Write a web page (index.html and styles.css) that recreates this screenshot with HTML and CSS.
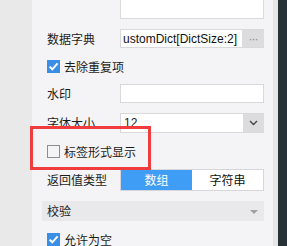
FILE: index.html
```html
<!DOCTYPE html>
<html lang="zh">
<head>
<meta charset="utf-8">
<link rel="stylesheet" href="styles.css">
</head>
<body>
<div class="screen">
  <div class="gutter"></div>
  <div class="panel">
    <div class="row r-top">
      <div class="field top-box"></div>
    </div>
    <div class="row r-dict">
      <span class="label">数据字典</span>
      <div class="field dict">
        <span class="dict-text">ustomDict[DictSize:2]</span>
        <span class="dots">···</span>
      </div>
    </div>
    <div class="row r-check">
      <span class="cb checked"><svg viewBox="0 0 13 13" width="13" height="13"><path d="M2.6 6.6 L5.3 9.3 L10.6 3.4" fill="none" stroke="#fff" stroke-width="2"/></svg></span>
      <span class="cb-label">去除重复项</span>
    </div>
    <div class="row r-input">
      <span class="label">水印</span>
      <div class="field"></div>
    </div>
    <div class="row r-select">
      <span class="label">字体大小</span>
      <div class="field select">
        <span class="sel-text">12</span>
        <span class="sel-arrow"><svg viewBox="0 0 9 6" width="9" height="6"><path d="M1 1 L4.5 4.5 L8 1" fill="none" stroke="#444" stroke-width="1.4"/></svg></span>
      </div>
    </div>
    <div class="row r-check2">
      <span class="cb"></span>
      <span class="cb-label">标签形式显示</span>
    </div>
    <div class="row r-seg">
      <span class="label">返回值类型</span>
      <div class="seg">
        <span class="seg-item active">数组</span>
        <span class="seg-item">字符串</span>
      </div>
    </div>
    <div class="row r-head">
      <div class="section-head">
        <span>校验</span>
        <span class="tri"></span>
      </div>
    </div>
    <div class="row r-check3">
      <span class="cb checked"><svg viewBox="0 0 13 13" width="13" height="13"><path d="M2.6 6.6 L5.3 9.3 L10.6 3.4" fill="none" stroke="#fff" stroke-width="2"/></svg></span>
      <span class="cb-label">允许为空</span>
    </div>
    <div class="highlight"></div>
  </div>
  <div class="strip"></div>
  <div class="dark"></div>
</div>
</body>
</html>
```

FILE: styles.css
```css
* { box-sizing: border-box; }
html, body { margin: 0; padding: 0; }
body {
  width: 287px;
  height: 246px;
  overflow: hidden;
  font-family: "Noto Sans CJK SC", "Liberation Sans", sans-serif;
  font-size: 12px;
  color: #1b1b1b;
}
.screen {
  display: flex;
  width: 287px;
  height: 246px;
}
.gutter { width: 32px; background: #e9e9e9; }
.panel {
  position: relative;
  width: 241px;
  background: #f4f4f6;
  display: flex;
  flex-direction: column;
  padding-left: 10px;
}
.strip { width: 5px; background: #e6e6e7; }
.dark { width: 9px; background: #263235; }

.row {
  display: flex;
  align-items: center;
  flex: none;
}
.label {
  width: 78px;
  padding-left: 5px;
  line-height: 1;
  white-space: nowrap;
}
.field {
  width: 144px;
  height: 100%;
  background: #fff;
  border: 1px solid #d9d9dc;
  display: flex;
  align-items: center;
  overflow: hidden;
}
.r-top { height: 19px; padding-left: 78px; }
.top-box { border-top: none; }
.r-dict { height: 19px; margin-top: 10px; }
.dict { border-right: none; }
.dict-text {
  flex: 1;
  font-family: "Liberation Sans", Arial, sans-serif;
  font-size: 12px;
  padding-left: 2px;
  white-space: nowrap;
  overflow: hidden;
  color: #111;
}
.dots {
  width: 22px;
  height: 100%;
  background: #dcdcdf;
  color: #8a8a8e;
  display: flex;
  align-items: center;
  justify-content: center;
  font-family: "Liberation Sans", sans-serif;
  font-size: 12px;
  letter-spacing: -1px;
}
.r-check { height: 13px; margin-top: 12px; padding-left: 5px; }
.r-input { height: 19px; margin-top: 11px; }
.r-select { height: 20px; margin-top: 10px; }
.select { border-right: none; }
.sel-text {
  flex: 1;
  padding-left: 3px;
  font-family: "Liberation Sans", sans-serif;
  font-size: 12px;
}
.sel-arrow {
  width: 21px;
  height: 100%;
  background: #dcdcdf;
  display: flex;
  align-items: center;
  justify-content: center;
}
.r-check2 { height: 13px; margin-top: 12px; padding-left: 5px; }
.r-seg { height: 22px; margin-top: 11px; }
.r-head { height: 20px; margin-top: 10px; }
.r-check3 { height: 13px; margin-top: 12px; padding-left: 5px; }

.cb {
  width: 13px;
  height: 13px;
  border: 1px solid #8e8e8e;
  background: transparent;
  flex: none;
  display: flex;
}
.cb.checked { background: #3a8ee6; border-color: #3a8ee6; }
.cb.checked svg { margin: -1px; }
.cb-label { margin-left: 4px; line-height: 1; }

.seg {
  width: 144px;
  height: 100%;
  display: flex;
  border: 1px solid #d6d6da;
  background: #fff;
}
.seg-item {
  flex: 1;
  display: flex;
  align-items: center;
  justify-content: center;
  line-height: 1;
  color: #111;
}
.seg-item.active { background: #409df5; color: #fff; }

.section-head {
  width: 222px;
  height: 100%;
  background: #e9e9eb;
  display: flex;
  align-items: center;
  justify-content: space-between;
  padding: 0 6px 0 5px;
  line-height: 1;
}
.tri {
  width: 0;
  height: 0;
  border-left: 4px solid transparent;
  border-right: 4px solid transparent;
  border-top: 4px solid #a0a0a3;
  margin-top: 2px;
}
.highlight {
  position: absolute;
  left: -2px;
  top: 126px;
  width: 121px;
  height: 44px;
  border: 3px solid #f03c3c;
  pointer-events: none;
}
```
